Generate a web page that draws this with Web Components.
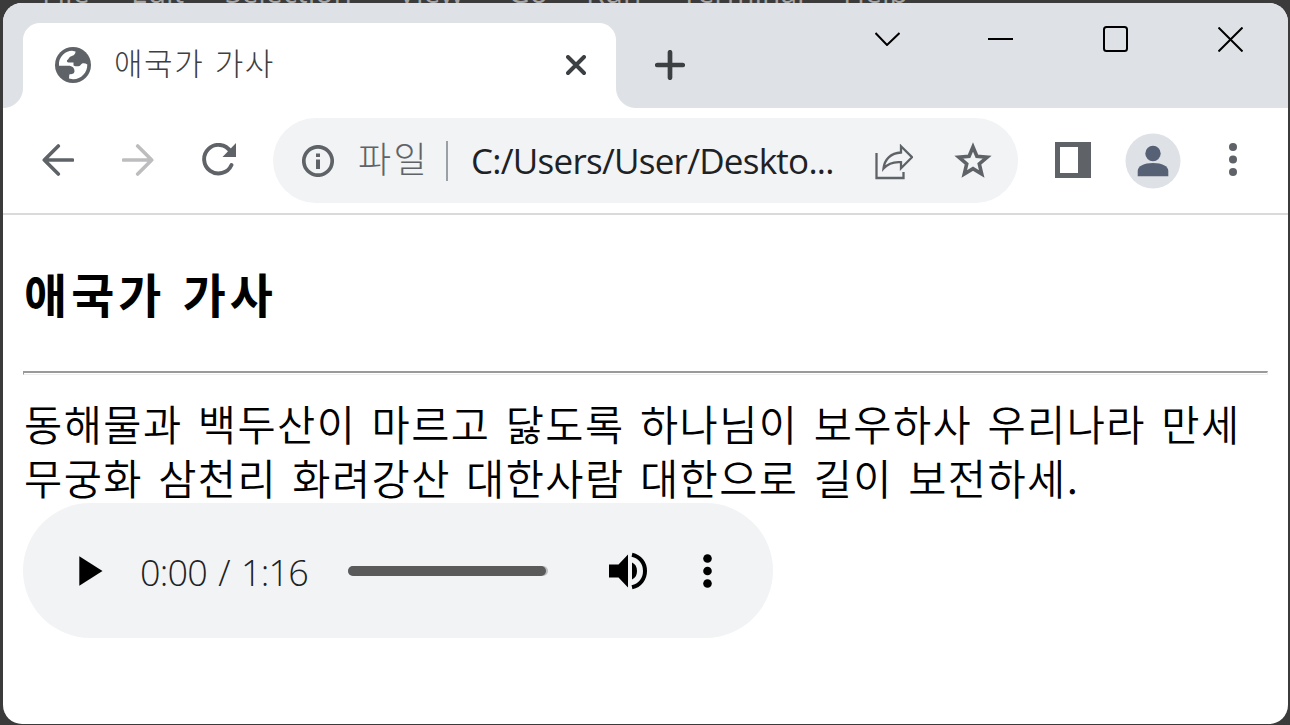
<!DOCTYPE html>
<html lang="ko">
<head>
<meta charset="utf-8">
<title>애국가 가사</title>
<style>
html,body{margin:0;height:100%;overflow:hidden}
body{font-family:"Open Sans","Noto Sans CJK KR",sans-serif;background:#3b3b3b}
</style>
</head>
<body>
<desktop-view>
  <editor-menu slot="menu"></editor-menu>
  <browser-window>
    <tab-strip slot="tabs"><browser-tab slot="tab">애국가 가사</browser-tab></tab-strip>
    <tool-bar slot="toolbar"></tool-bar>
    <lyrics-page>
      <span slot="title">애국가 가사</span>
      <span slot="line1">동해물과 백두산이 마르고 닳도록 하나님이 보우하사 우리나라 만세</span>
      <span slot="line2">무궁화 삼천리 화려강산 대한사람 대한으로 길이 보전하세.</span>
      <audio-player slot="player"></audio-player>
    </lyrics-page>
  </browser-window>
</desktop-view>
<script>
const define = (name, html) => customElements.define(name, class extends HTMLElement {
  constructor() {
    super();
    const t = document.createElement('template');
    t.innerHTML = html;
    this.attachShadow({mode: 'open'}).append(t.content.cloneNode(true));
  }
});

const ICONS = {
  globe: [36, 36, '<circle cx="18" cy="18" r="18" fill="#5f6368"/><path d="M4 15.5C5 9 10.500 4 17 3.800L20.500 4.500C20.500 8 18 8.500 15.500 9.500C13.500 10.500 13.800 12.500 12 13.200C11.500 15 12.500 15.500 14.500 15.500H18.500V18.500C21.500 20 25 19.500 26 17.500C27.500 15.500 30 16 32.300 17.500C32.500 25.500 26 32.500 18 32.300L14 31.500L14.300 27.500C17 27 19 27 19.500 24.500C19.500 21 17.500 18.700 13 18.800H4Z" fill="#fff"/>'],
  close: [20, 20, '<path d="M2 2 18 18M18 2 2 18" stroke="#3c4043" stroke-width="3.900" stroke-linecap="round"/>'],
  plus: [30, 30, '<path d="M15 2.300V27.700M2.300 15H27.700" stroke="#3c4043" stroke-width="4.700" stroke-linecap="round"/>'],
  chevron: [25, 14, '<path d="M.5 1 12 13 24.500 1" stroke="#000" stroke-width="2" fill="none"/>'],
  minimize: [25, 2, '<path d="M0 1H25" stroke="#000" stroke-width="2"/>'],
  maximize: [25, 26, '<rect x="1" y="1" width="23" height="24" rx="2.500" stroke="#000" stroke-width="2" fill="none"/>'],
  cross: [25, 25, '<path d="M.5 .5 24.500 24.500M24.500 .5 .5 24.500" stroke="#000" stroke-width="2"/>'],
  back: [32, 32, '<path d="M30.500 16H2.500M16.300 2 2.300 16 16.300 30" stroke="#5f6368" stroke-width="3.600" stroke-linecap="round" stroke-linejoin="round" fill="none"/>'],
  forward: [32, 32, '<path d="M1.500 16H29.500M15.700 2 29.700 16 15.700 30" stroke="#bdbdbf" stroke-width="3.600" stroke-linecap="round" stroke-linejoin="round" fill="none"/>'],
  reload: [35, 33, '<path d="M28.500 8.500A14.300 14.300 0 1 0 29.500 22" stroke="#5f6368" stroke-width="3.900" stroke-linecap="round" fill="none"/><path d="M34 0V14H20.500Z" fill="#5f6368"/>'],
  info: [32, 32, '<circle cx="16" cy="16" r="14.200" stroke="#5f6368" stroke-width="3.700" fill="none"/><path d="M14 8.500H18V12H14ZM14 14.500H18V24H14Z" fill="#5f6368"/>'],
  share: [38, 36, '<path d="M1.500 9V34H28.500V28" stroke="#5f6368" stroke-width="2.300" fill="none"/><path d="M26 2.200 37 13.200 26 24.200V18.200C18 17.500 13 19.500 8.500 24.500C9.500 15.500 15.500 9 26 8.500Z" stroke="#5f6368" stroke-width="2.300" fill="none"/>'],
  star: [38, 37, '<path d="M19 5 22.900 14.300 33.200 15.200 25.300 22 27.700 32 19 26.600 10.300 32 12.700 22 4.800 15.200 15.100 14.300Z" stroke="#5f6368" stroke-width="3.600" fill="none"/>'],
  panel: [36, 36, '<path fill-rule="evenodd" d="M0 0H36V36H0ZM5 5V31H23V5Z" fill="#5f6368"/>'],
  person: [56, 56, '<circle cx="28" cy="28" r="27.500" fill="#dee1e6"/><circle cx="28" cy="20.500" r="7.700" fill="#566176"/><path d="M12.700 43.300V38C12.700 33 19 30 28 30S43.300 33 43.300 38V43.300Z" fill="#566176"/>'],
  more: [8, 33, '<g fill="#5f6368"><circle cx="4" cy="4" r="4"/><circle cx="4" cy="16.500" r="4"/><circle cx="4" cy="29" r="4"/></g>'],
  play: [24, 30, '<path d="M.3 .3V29.700L23.500 15Z"/>'],
  volume: [38, 38, '<path d="M0 12.600H9.500L19 2.500V35.500L9.500 25.600H0ZM23 10.500C26.500 12 28 15 28 19S26.500 26 23 27.500Z"/><path d="M23 2.700C31 4.500 36 11 36 19S31 33.500 23 35.300" fill="none" stroke="#000" stroke-width="4"/>'],
  dots: [9, 34, '<circle cx="4.500" cy="4.500" r="4.300"/><circle cx="4.500" cy="17" r="4.300"/><circle cx="4.500" cy="29.500" r="4.300"/>'],
};
customElements.define('ui-icon', class extends HTMLElement {
  constructor() {
    super();
    this.attachShadow({mode: 'open'});
  }
  connectedCallback() {
    const [w, h, body] = ICONS[this.getAttribute('name')];
    this.shadowRoot.innerHTML = `<style>:host{display:block;flex:none;width:${w}px;height:${h}px}svg{display:block}</style>
      <svg width="${w}" height="${h}" viewBox="0 0 ${w} ${h}">${body}</svg>`;
  }
});

define('desktop-view', `<style>
  :host{display:grid;grid-template-rows:3px 721px 1px;height:725px;padding:0 2px 0 3px;box-sizing:border-box;background:#3b3b3b}
</style><slot name="menu"></slot><slot></slot>`);

define('editor-menu', `<style>
  :host{display:flex;align-items:flex-end;height:3px;overflow:hidden;padding-left:39px;font:30px/30px "Open Sans",sans-serif;color:#a5a5a5}
  span{display:block;flex:none;height:24px;line-height:26px}
</style><span style="width:89px">File</span><span style="width:94px">Edit</span><span style="width:173px">Selection</span><span style="width:110px">View</span><span style="width:78px">Go</span><span style="width:95px">Run</span><span style="width:162px">Terminal</span><span>Help</span>`);

define('browser-window', `<style>
  :host{display:flex;flex-direction:column;background:#fff;border-radius:19px;overflow:hidden}
</style><slot name="tabs"></slot><slot name="toolbar"></slot><slot></slot>`);

define('tab-strip', `<style>
  :host{display:flex;height:105px;flex:none;background:#dee1e6;padding-left:20px}
  .new{margin:47px 0 0 39px}
  .controls{display:flex;flex:1;justify-content:flex-end;gap:90px;padding:23px 45px 0 0;height:26px;align-items:center}
  .controls ui-icon:first-child{margin-right:-2px}
</style><slot name="tab"></slot><ui-icon class="new" name="plus"></ui-icon>
<div class="controls"><ui-icon name="chevron"></ui-icon><ui-icon name="minimize"></ui-icon><ui-icon name="maximize"></ui-icon><ui-icon name="cross"></ui-icon></div>`);

define('browser-tab', `<style>
  :host{display:flex;position:relative;box-sizing:border-box;width:593px;height:85px;margin:20px 0 0 0;padding:0 30px 2px 32px;align-items:center;background:#fff;border-radius:17px 17px 0 0;
    font:300 31px/40px "Noto Sans CJK KR",sans-serif;color:#3c4043}
  :host::before,:host::after{content:"";position:absolute;bottom:0;width:20px;height:20px}
  :host::before{right:100%;background:radial-gradient(circle at 0 0,transparent 19.500px,#fff 20.500px)}
  :host::after{left:100%;background:radial-gradient(circle at 100% 0,transparent 19.500px,#fff 20.500px)}
  .t{flex:1;margin-left:23px;margin-top:-6px;letter-spacing:1.600px;word-spacing:0}
</style><ui-icon name="globe"></ui-icon><div class="t"><slot></slot></div><ui-icon name="close"></ui-icon>`);

define('tool-bar', `<style>
  :host{display:flex;align-items:center;height:105px;flex:none;border-bottom:2px solid #dadada;padding:0 51px 0 39px}
  ui-icon{margin-bottom:2px}
  .fwd{margin-left:48px}.rel{margin-left:48px}
  address-bar{margin-left:36px}
  .panel{margin-left:37px}.who{margin-left:34px;margin-bottom:0}.more{margin-left:48px}
</style><ui-icon name="back"></ui-icon><ui-icon class="fwd" name="forward"></ui-icon><ui-icon class="rel" name="reload"></ui-icon>
<address-bar></address-bar><ui-icon class="panel" name="panel"></ui-icon><ui-icon class="who" name="person"></ui-icon><ui-icon class="more" name="more"></ui-icon>`);

define('address-bar', `<style>
  :host{display:flex;align-items:center;box-sizing:border-box;flex:none;width:745px;height:85px;border-radius:43px;background:#f1f3f4;padding:0 25px 0 29px;white-space:nowrap}
  .kind{width:70px;margin-left:24px;margin-top:-7px;font:300 36px/50px "Noto Sans CJK KR",sans-serif;letter-spacing:2.500px;color:#5f6368}
  .bar{width:2px;height:40px;background:#9aa0a6;margin-left:18px}
  .url{width:366px;margin-left:23px;font:35px/48px "Open Sans",sans-serif;letter-spacing:-.75px;color:#202124}
  .share{margin:2px 0 0 38px}.star{margin-left:41px}
</style><ui-icon name="info"></ui-icon><span class="kind">파일</span><span class="bar"></span><span class="url">C:/Users/User/Deskto...</span>
<ui-icon class="share" name="share"></ui-icon><ui-icon class="star" name="star"></ui-icon>`);

define('lyrics-page', `<style>
  :host{display:block;padding:47px 20px 0 20px;white-space:nowrap;color:#000;font-family:"Noto Sans CJK KR",sans-serif}
  h3{margin:0 0 0 1px;height:62px;font-size:46.800px;line-height:62px;font-weight:700;letter-spacing:4.100px;word-spacing:0}
  hr{margin:47px 0 21px;height:1px;border:solid;border-width:2px 1px 1px;border-color:#9a9a9a #eee #eee #9a9a9a;box-sizing:border-box;height:4px}
  p{margin:0 0 0 1px;font-size:41.500px;line-height:54px;font-weight:350;letter-spacing:1.450px;word-spacing:2.200px}
  ::slotted(audio-player){margin-top:-1px}
</style><h3><slot name="title"></slot></h3><hr><p><slot name="line1"></slot></p><p><slot name="line2"></slot></p><slot name="player"></slot>`);

define('audio-player', `<style>
  :host{display:flex;align-items:center;box-sizing:border-box;width:750px;height:135px;border-radius:68px;background:#f1f3f4;padding:0 60px 0 56px}
  .time{width:170px;margin-left:37px;margin-top:4px;font:300 36px/48px "Open Sans",sans-serif;letter-spacing:-.8px;word-spacing:2.700px;color:#202124}
  .track{width:200px;height:10px;border-radius:5px;background:#bcbdbe;margin-left:38px;display:flex}
  .track i{width:198px;border-radius:5px;background:#5a5a5a}
  .vol{margin-left:61px}.dots{margin-left:56px}
</style><ui-icon name="play"></ui-icon><span class="time">0:00 / 1:16</span><span class="track"><i></i></span><ui-icon class="vol" name="volume"></ui-icon><ui-icon class="dots" name="dots"></ui-icon>`);
</script>
</body>
</html>
